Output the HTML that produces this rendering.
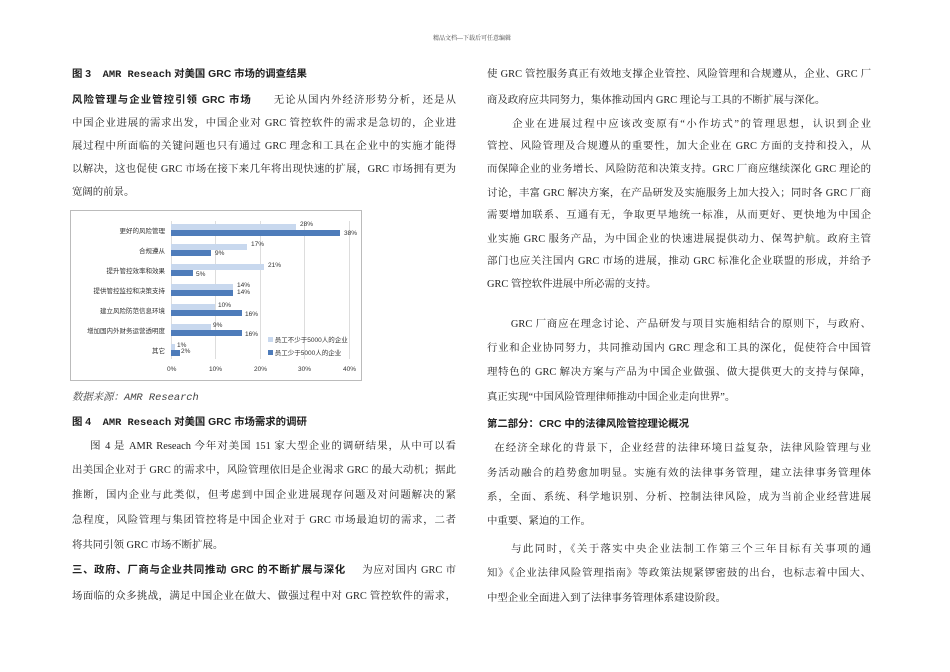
<!DOCTYPE html><html><head><meta charset="utf-8"><style>
body{margin:0;width:950px;height:672px;background:#fff;position:relative;overflow:hidden;font-family:"Liberation Serif","Noto Serif CJK SC",serif;color:#222;}
.l,.r{position:absolute;font-size:10.4px;line-height:16px;white-space:nowrap;text-align:justify;text-align-last:justify;overflow:hidden;}
.l{left:72px;width:384px}.r{left:487px;width:384px}
.n{text-align-last:left}
b{font-family:"Liberation Sans","Noto Sans CJK SC",sans-serif;font-weight:bold;}
.h{font-family:"Liberation Sans","Noto Sans CJK SC",sans-serif;font-weight:bold;text-align-last:left}
.m{font-family:"Liberation Mono","Noto Sans CJK SC",monospace}
#chart{position:absolute;left:70px;top:210px;width:292px;height:171px;border:1px solid #bbb;box-sizing:border-box;font-family:"Liberation Sans","Noto Sans CJK SC",sans-serif;font-size:6.5px;color:#333}
.cat{position:absolute;right:196px;text-align:right;white-space:nowrap}
.bl{position:absolute;height:6px;background:#c8d8ee;left:100px}
.bd{position:absolute;height:6px;background:#4e7cba;left:100px}
.v{position:absolute;white-space:nowrap}
.gl{position:absolute;top:10px;height:138px;width:1px;background:#ddd}
</style></head><body>
<div style="position:absolute;left:433px;top:33px;font-size:6px;color:#444">精品文档---下载后可任意编辑</div>

<div class="l h" style="top:67px">图 3&nbsp;&nbsp;&nbsp;&nbsp;<span class="m">AMR Reseach</span> 对美国 GRC 市场的调查结果</div>
<div class="l" style="top:93px"><b>风险管理与企业管控引领 GRC 市场</b>&nbsp;&nbsp;&nbsp;&nbsp;&nbsp;&nbsp;无论从国内外经济形势分析，还是从</div>
<div class="l" style="top:116px">中国企业进展的需求出发，中国企业对 GRC 管控软件的需求是急切的，企业进</div>
<div class="l" style="top:139px">展过程中所面临的关键问题也只有通过 GRC 理念和工具在企业中的实施才能得</div>
<div class="l" style="top:162px">以解决，这也促使 GRC 市场在接下来几年将出现快速的扩展，GRC 市场拥有更为</div>
<div class="l n" style="top:185px">宽阔的前景。</div>

<div id="chart">
<div class="gl" style="left:100px"></div><div class="gl" style="left:144px"></div><div class="gl" style="left:189px"></div><div class="gl" style="left:233px"></div><div class="gl" style="left:278px"></div>
<div class="cat" style="top:14px">更好的风险管理</div>
<div class="bl" style="top:13px;width:125px"></div><div class="bd" style="top:19px;width:169px"></div>
<div class="v" style="left:229px;top:10px">28%</div><div class="v" style="left:273px;top:19px">38%</div>
<div class="cat" style="top:34px">合规遵从</div>
<div class="bl" style="top:33px;width:76px"></div><div class="bd" style="top:39px;width:40px"></div>
<div class="v" style="left:180px;top:30px">17%</div><div class="v" style="left:144px;top:39px">9%</div>
<div class="cat" style="top:54px">提升管控效率和效果</div>
<div class="bl" style="top:53px;width:93px"></div><div class="bd" style="top:59px;width:22px"></div>
<div class="v" style="left:197px;top:51px">21%</div><div class="v" style="left:125px;top:60px">5%</div>
<div class="cat" style="top:74px">提供管控监控和决策支持</div>
<div class="bl" style="top:73px;width:62px"></div><div class="bd" style="top:79px;width:62px"></div>
<div class="v" style="left:166px;top:71px">14%</div><div class="v" style="left:166px;top:78px">14%</div>
<div class="cat" style="top:94px">建立风险防范信息环境</div>
<div class="bl" style="top:93px;width:44px"></div><div class="bd" style="top:99px;width:71px"></div>
<div class="v" style="left:147px;top:91px">10%</div><div class="v" style="left:174px;top:100px">16%</div>
<div class="cat" style="top:114px">增加国内外财务运营透明度</div>
<div class="bl" style="top:113px;width:40px"></div><div class="bd" style="top:119px;width:71px"></div>
<div class="v" style="left:142px;top:111px">9%</div><div class="v" style="left:174px;top:120px">16%</div>
<div class="cat" style="top:134px">其它</div>
<div class="bl" style="top:133px;width:4px"></div><div class="bd" style="top:139px;width:9px"></div>
<div class="v" style="left:106px;top:131px">1%</div><div class="v" style="left:110px;top:137px">2%</div>
<div style="position:absolute;left:197px;top:123px;white-space:nowrap"><span style="display:inline-block;width:5px;height:5px;background:#c8d8ee"></span> 员工不少于5000人的企业</div>
<div style="position:absolute;left:197px;top:136px;white-space:nowrap"><span style="display:inline-block;width:5px;height:5px;background:#4e7cba"></span> 员工少于5000人的企业</div>
<div class="v" style="left:96px;top:155px">0%</div><div class="v" style="left:138px;top:155px">10%</div><div class="v" style="left:183px;top:155px">20%</div><div class="v" style="left:227px;top:155px">30%</div><div class="v" style="left:272px;top:155px">40%</div>
</div>

<div class="l n" style="top:390px;font-style:italic;color:#444">数据来源：<span class="m">AMR Research</span></div>
<div class="l h" style="top:415px">图 4&nbsp;&nbsp;&nbsp;&nbsp;<span class="m">AMR Reseach</span> 对美国 GRC 市场需求的调研</div>
<div class="l" style="top:439px">&nbsp;&nbsp;&nbsp;&nbsp;&nbsp;图 4 是 AMR Reseach 今年对美国 151 家大型企业的调研结果，从中可以看</div>
<div class="l" style="top:463px">出美国企业对于 GRC 的需求中，风险管理依旧是企业渴求 GRC 的最大动机；据此</div>
<div class="l" style="top:488px">推断，国内企业与此类似，但考虑到中国企业进展现存问题及对问题解决的紧</div>
<div class="l" style="top:513px">急程度，风险管理与集团管控将是中国企业对于 GRC 市场最迫切的需求，二者</div>
<div class="l n" style="top:538px">将共同引领 GRC 市场不断扩展。</div>
<div class="l" style="top:563px"><b>三、政府、厂商与企业共同推动 GRC 的不断扩展与深化</b>&nbsp;&nbsp;&nbsp;&nbsp;&nbsp;为应对国内 GRC 市</div>
<div class="l" style="top:589px">场面临的众多挑战，满足中国企业在做大、做强过程中对 GRC 管控软件的需求，</div>

<div class="r" style="top:67px">使 GRC 管控服务真正有效地支撑企业管控、风险管理和合规遵从，企业、GRC 厂</div>
<div class="r n" style="top:93px">商及政府应共同努力，集体推动国内 GRC 理论与工具的不断扩展与深化。</div>
<div class="r" style="top:117px">&nbsp;&nbsp;&nbsp;&nbsp;&nbsp;&nbsp;企业在进展过程中应该改变原有“小作坊式”的管理思想，认识到企业</div>
<div class="r" style="top:139px">管控、风险管理及合规遵从的重要性，加大企业在 GRC 方面的支持和投入，从</div>
<div class="r" style="top:162px">而保障企业的业务增长、风险防范和决策支持。GRC 厂商应继续深化 GRC 理论的</div>
<div class="r" style="top:186px">讨论，丰富 GRC 解决方案，在产品研发及实施服务上加大投入；同时各 GRC 厂商</div>
<div class="r" style="top:208px">需要增加联系、互通有无，争取更早地统一标准，从而更好、更快地为中国企</div>
<div class="r" style="top:232px">业实施 GRC 服务产品，为中国企业的快速进展提供动力、保驾护航。政府主管</div>
<div class="r" style="top:254px">部门也应关注国内 GRC 市场的进展，推动 GRC 标准化企业联盟的形成，并给予</div>
<div class="r n" style="top:277px">GRC 管控软件进展中所必需的支持。</div>
<div class="r" style="top:317px">&nbsp;&nbsp;&nbsp;&nbsp;&nbsp;&nbsp;&nbsp;GRC 厂商应在理念讨论、产品研发与项目实施相结合的原则下，与政府、</div>
<div class="r" style="top:341px">行业和企业协同努力，共同推动国内 GRC 理念和工具的深化，促使符合中国管</div>
<div class="r" style="top:365px">理特色的 GRC 解决方案与产品为中国企业做强、做大提供更大的支持与保障，</div>
<div class="r n" style="top:390px">真正实现“中国风险管理律师推动中国企业走向世界”。</div>
<div class="r h" style="top:417px">第二部分：CRC 中的法律风险管控理论概况</div>
<div class="r" style="top:441px">&nbsp;&nbsp;在经济全球化的背景下，企业经营的法律环境日益复杂，法律风险管理与业</div>
<div class="r" style="top:466px">务活动融合的趋势愈加明显。实施有效的法律事务管理，建立法律事务管理体</div>
<div class="r" style="top:490px">系，全面、系统、科学地识别、分析、控制法律风险，成为当前企业经营进展</div>
<div class="r n" style="top:514px">中重要、紧迫的工作。</div>
<div class="r" style="top:542px">&nbsp;&nbsp;&nbsp;&nbsp;&nbsp;&nbsp;与此同时，《关于落实中央企业法制工作第三个三年目标有关事项的通</div>
<div class="r" style="top:566px">知》《企业法律风险管理指南》等政策法规紧锣密鼓的出台，也标志着中国大、</div>
<div class="r n" style="top:591px">中型企业全面进入到了法律事务管理体系建设阶段。</div>
</body></html>
